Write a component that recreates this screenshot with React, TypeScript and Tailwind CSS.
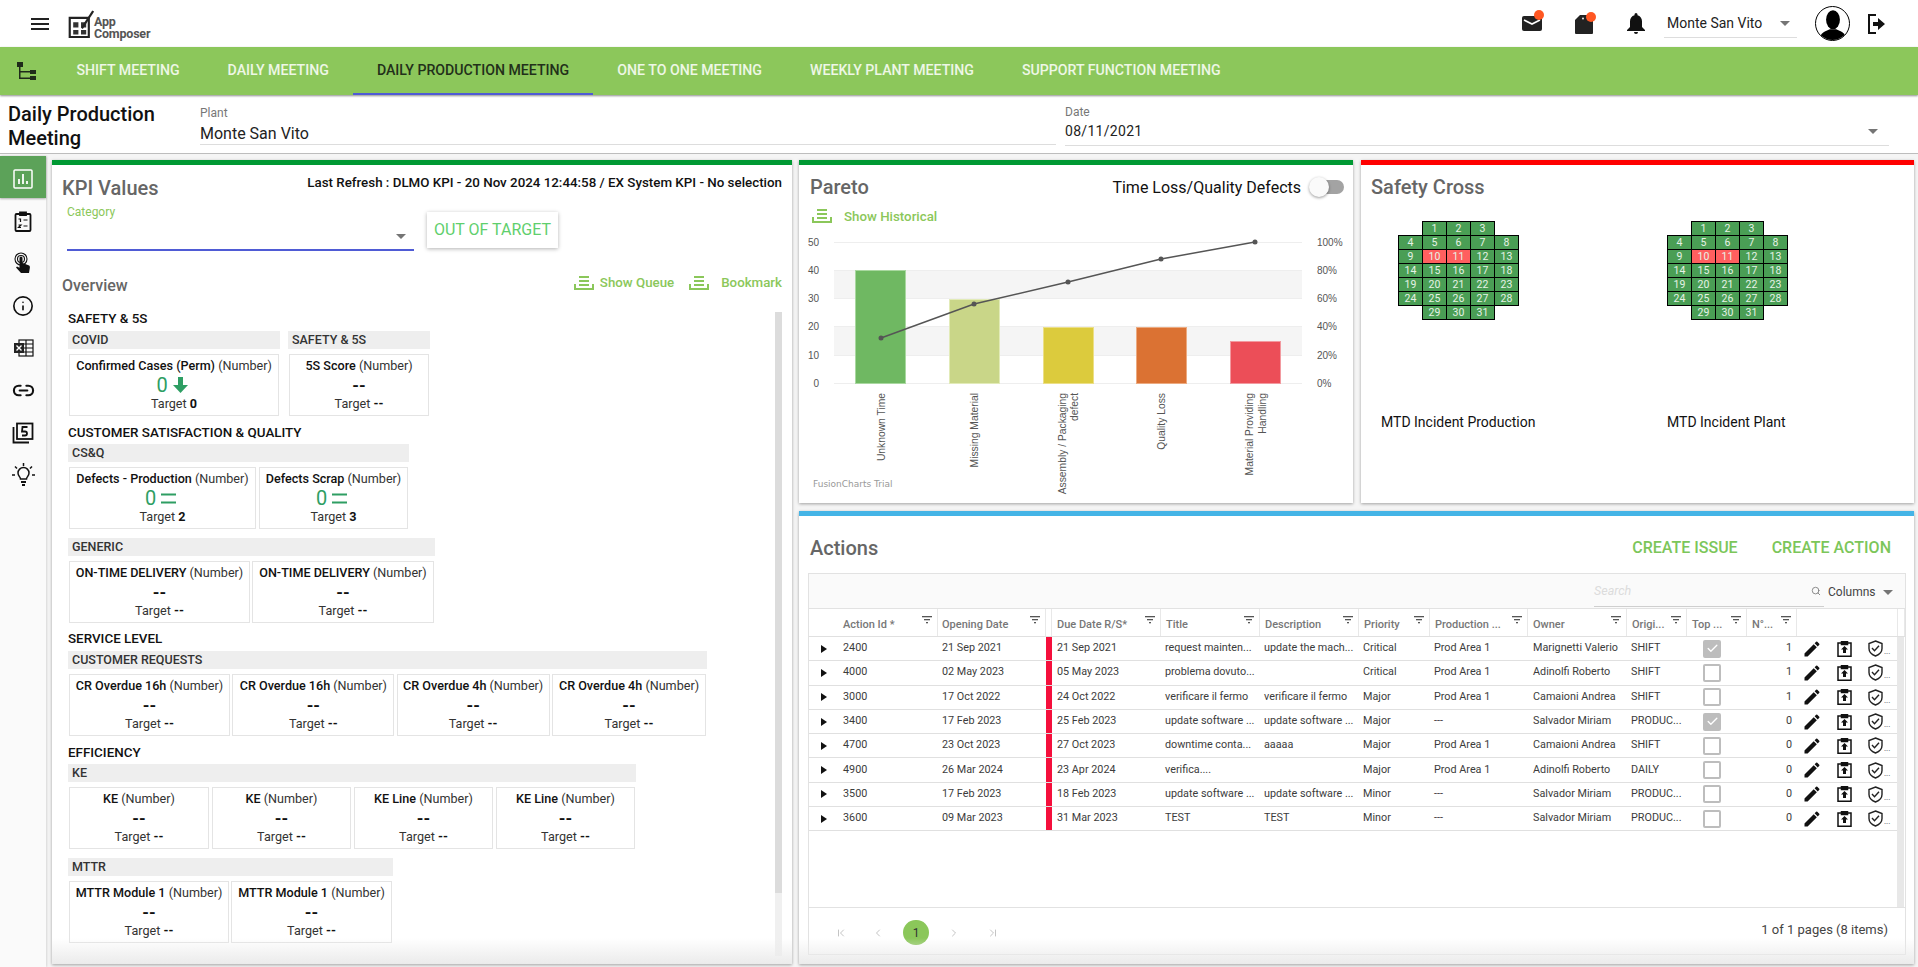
import type { ReactNode } from "react";
import { Check, ChevronFirst, ChevronLast, ChevronLeft, ChevronRight, Info, Link2, Search } from "lucide-react";

const tabs = ["SHIFT MEETING", "DAILY MEETING", "DAILY PRODUCTION MEETING", "ONE TO ONE MEETING", "WEEKLY PLANT MEETING", "SUPPORT FUNCTION MEETING"];

function Caret({ className = "" }: { className?: string }) {
  return <span className={`inline-block w-0 h-0 border-x-[5px] border-x-transparent border-t-[5px] border-t-[#757575] ${className}`} />;
}

function QueueIcon() {
  return (
    <svg width="20" height="14" viewBox="0 0 20 14" fill="none" stroke="#8bc75a" strokeWidth="2" className="shrink-0">
      <path d="M5 1h10M5 5h10M5 9h10M1 8v5h18V8" />
    </svg>
  );
}

function FilterIcon() {
  return (
    <svg width="10" height="8" viewBox="0 0 10 8" className="shrink-0" fill="#555">
      <rect x="0" y="0" width="10" height="1.3" />
      <rect x="2" y="3" width="6" height="1.3" />
      <rect x="4" y="6" width="2" height="1.3" />
    </svg>
  );
}

function KpiCard({ name, w, value = "--", target = "--", trend }: { name: string; w: string; value?: string; target?: string; trend?: "down" | "eq" }) {
  return (
    <div className={`${w} h-[62px] border border-[#e4e4e4] flex flex-col items-center pt-[2px] shrink-0`}>
      <p className="text-[12.6px] leading-[18px] text-[#111] whitespace-nowrap"><span className="font-medium">{name}</span> <span className="text-[#333]">(Number)</span></p>
      {trend ? (
        <div className="flex items-center gap-[5px] h-[20px] mr-[4px] text-[#2e9e63]">
          <span className="text-[20px] leading-[20px]">{value}</span>
          {trend === "down" ? (
            <svg width="15" height="16" viewBox="0 0 15 16" fill="#2e9e63"><path d="M5 0h5v8h5l-7.500 8L0 8h5z" /></svg>
          ) : (
            <svg width="15" height="11" viewBox="0 0 15 11" fill="#2e9e63"><rect width="15" height="2" y="0.500" /><rect width="15" height="2" y="8.500" /></svg>
          )}
        </div>
      ) : (
        <div className="h-[20px] text-[17px] leading-[20px] font-bold text-[#111]">{value}</div>
      )}
      <p className="text-[12.6px] leading-[16px] text-[#333] mt-[1px]">Target <span className="font-bold text-[#111]">{target}</span></p>
    </div>
  );
}

function Group({ title, w, children }: { title: string; w: string; children: ReactNode }) {
  return (
    <div className={`${w} shrink-0`}>
      <div className="h-[18px] bg-[#eeeeee] text-[12.5px] leading-[18px] font-medium text-[#333] pl-[4px]">{title}</div>
      <div className="flex justify-between px-[1px] mt-[5px]">{children}</div>
    </div>
  );
}

function Heading({ children }: { children: ReactNode }) {
  return <h3 className="text-[13.4px] leading-[18px] font-medium text-[#111]">{children}</h3>;
}

function BottomFade() {
  return <div className="absolute left-0 right-0 bottom-0 h-[26px] bg-gradient-to-t from-[#ebebeb] to-transparent pointer-events-none" />;
}

function KpiPanel() {
  return (
    <section className="relative w-[740px] h-[804px] bg-white border-t-[5px] border-[#009933] shadow-[0_1px_3px_rgba(0,0,0,.35)] shrink-0 flex flex-col">
      <div className="flex justify-between pl-[10px] pr-[10px] mt-[8px]">
        <h2 className="text-[20px] font-medium text-[#666] leading-[28px] pt-[1px] h-[28px]">KPI Values</h2>
        <p className="text-[13.35px] font-medium text-[#111] leading-[18px] pt-[1px]">Last Refresh : DLMO KPI - 20 Nov 2024 12:44:58 / EX System KPI - No selection</p>
      </div>
      <div className="flex items-start pl-[15px] mt-[4px]">
        <div className="w-[347px] h-[46px] border-b-2 border-[#4f5bd5] relative">
          <span className="block text-[12px] leading-[14px] text-[#8bc75a]">Category</span>
          <Caret className="absolute right-[8px] top-[29px]" />
        </div>
        <button className="ml-[13px] mt-[7px] w-[131px] h-[36px] bg-white text-[#5fcf6d] text-[16px] shadow-[0_1px_4px_rgba(0,0,0,.3)]">OUT OF TARGET</button>
      </div>
      <div className="flex justify-between items-start pl-[10px] pr-[10px] mt-[23px] h-[24px]">
        <span className="text-[16px] leading-[24px] font-medium text-[#666]">Overview</span>
        <div className="flex items-center h-[18px] text-[13.3px] font-medium text-[#8bc75a]">
          <QueueIcon /><span className="ml-[6px]">Show Queue</span>
          <span className="ml-[15px]"><QueueIcon /></span><span className="ml-[12px]">Bookmark</span>
        </div>
      </div>
      <div className="relative flex-1 min-h-0 pl-[16px] pt-[12px]">
        <div className="absolute right-[10px] top-[14px] bottom-[8px] w-[7px] bg-[#f0f0f0]">
          <div className="h-[581px] bg-[#dcdcdc]" />
        </div>
        <Heading>SAFETY &amp; 5S</Heading>
        <div className="flex gap-[8px] mt-[3px]">
          <Group title="COVID" w="w-[212px]"><KpiCard name="Confirmed Cases (Perm)" w="w-[210px]" value="0" target="0" trend="down" /></Group>
          <Group title="SAFETY & 5S" w="w-[142px]"><KpiCard name="5S Score" w="w-[140px]" /></Group>
        </div>
        <div className="mt-[8px]"><Heading>CUSTOMER SATISFACTION &amp; QUALITY</Heading></div>
        <div className="mt-[2px]">
          <Group title="CS&Q" w="w-[341px]">
            <KpiCard name="Defects - Production" w="w-[187px]" value="0" target="2" trend="eq" />
            <KpiCard name="Defects Scrap" w="w-[149px]" value="0" target="3" trend="eq" />
          </Group>
        </div>
        <div className="mt-[9px]">
          <Group title="GENERIC" w="w-[367px]">
            <KpiCard name="ON-TIME DELIVERY" w="w-[181px]" />
            <KpiCard name="ON-TIME DELIVERY" w="w-[182px]" />
          </Group>
        </div>
        <div className="mt-[7px]"><Heading>SERVICE LEVEL</Heading></div>
        <div className="mt-[3px]">
          <Group title="CUSTOMER REQUESTS" w="w-[639px]">
            <KpiCard name="CR Overdue 16h" w="w-[161px]" />
            <KpiCard name="CR Overdue 16h" w="w-[162px]" />
            <KpiCard name="CR Overdue 4h" w="w-[153px]" />
            <KpiCard name="CR Overdue 4h" w="w-[154px]" />
          </Group>
        </div>
        <div className="mt-[8px]"><Heading>EFFICIENCY</Heading></div>
        <div className="mt-[2px]">
          <Group title="KE" w="w-[568px]">
            <KpiCard name="KE" w="w-[140px]" />
            <KpiCard name="KE" w="w-[139px]" />
            <KpiCard name="KE Line" w="w-[139px]" />
            <KpiCard name="KE Line" w="w-[139px]" />
          </Group>
        </div>
        <div className="mt-[9px]">
          <Group title="MTTR" w="w-[325px]">
            <KpiCard name="MTTR Module 1" w="w-[160px]" />
            <KpiCard name="MTTR Module 1" w="w-[161px]" />
          </Group>
        </div>
      </div>
      <BottomFade />
    </section>
  );
}

// chart coordinates are page pixels, shifted by the svg's own origin
const bars = [
  { x: 855, top: 270, fill: "#6fb862", edge: "#a9d8a0" },
  { x: 949, top: 299, fill: "#c9d688", edge: "#e2ebb8" },
  { x: 1043, top: 327, fill: "#dccb3d", edge: "#ecdf86" },
  { x: 1136, top: 327, fill: "#db7233", edge: "#ecaa80" },
  { x: 1230, top: 341, fill: "#ec4e58", edge: "#f29aa0" },
];
const paretoLine = [[881, 338], [974, 304], [1068, 282], [1161, 259], [1255, 242]];
const gridY: [string, string, number][] = [["50", "100%", 242], ["40", "80%", 270], ["30", "60%", 298], ["20", "40%", 326], ["10", "20%", 355], ["0", "0%", 383]];
const xLabels: [string, number][][] = [
  [["Unknown Time", 885]],
  [["Missing Material", 978]],
  [["Assembly / Packaging", 1066], ["defect", 1078]],
  [["Quality Loss", 1165]],
  [["Material Providing", 1253], ["Handling", 1266]],
];

function ParetoChart() {
  return (
    <svg width="554" height="277" viewBox="799 226 554 277" className="block" fontFamily="Liberation Sans">
      <rect x="834" y="270" width="468" height="28" fill="#f5f5f5" />
      <rect x="834" y="326" width="468" height="29" fill="#f5f5f5" />
      {gridY.map(([l, , y]) => <line key={l} x1="834" x2="1302" y1={y + 0.5} y2={y + 0.5} stroke="#eeeeee" />)}
      {bars.map((b) => (
        <rect key={b.x} x={b.x + 0.5} y={b.top + 0.5} width="50" height={383 - b.top} fill={b.fill} stroke={b.edge} />
      ))}
      <polyline points={paretoLine.map((p) => p.join(",")).join(" ")} fill="none" stroke="#555" strokeWidth="1.5" />
      {paretoLine.map((p) => <circle key={p[0]} cx={p[0]} cy={p[1]} r="2.5" fill="#555" />)}
      {gridY.map(([l, r, y]) => (
        <g key={l} fontSize="10" fill="#555">
          <text x="819" y={y + 4} textAnchor="end">{l}</text>
          <text x="1317" y={y + 4}>{r}</text>
        </g>
      ))}
      {xLabels.flat().map(([s, x]) => (
        <text key={s} transform={`translate(${x},393) rotate(-90)`} textAnchor="end" fontSize="10.3" fill="#555">{s}</text>
      ))}
      <text x="813" y="487" fontSize="9" fill="#999" fontFamily="DejaVu Sans">FusionCharts Trial</text>
    </svg>
  );
}

function ParetoPanel() {
  return (
    <section className="w-[554px] h-[343px] bg-white border-t-[5px] border-[#009933] shadow-[0_1px_3px_rgba(0,0,0,.35)] shrink-0 flex flex-col">
      <div className="flex justify-between items-center pl-[11px] pr-[9px] mt-[8px] h-[28px]">
        <h2 className="text-[20px] font-medium text-[#666]">Pareto</h2>
        <div className="flex items-center">
          <span className="text-[16px] text-[#111] pt-[1px]">Time Loss/Quality Defects</span>
          <span className="relative ml-[11px] w-[32px] h-[14px] rounded-full bg-[#a3a3a3]">
            <span className="absolute -left-[3px] -top-[3px] w-[20px] h-[20px] rounded-full bg-[#fafafa] shadow-[0_1px_3px_rgba(0,0,0,.4)]" />
          </span>
        </div>
      </div>
      <div className="flex items-center pl-[13px] mt-[5px] text-[13.3px] font-medium text-[#8bc75a] h-[20px]">
        <QueueIcon /><span className="ml-[12px] pt-[1px]">Show Historical</span>
      </div>
      <ParetoChart />
    </section>
  );
}

const crossRows = [
  { pad: true, cells: [1, 2, 3] },
  { pad: false, cells: [4, 5, 6, 7, 8] },
  { pad: false, cells: [9, 10, 11, 12, 13] },
  { pad: false, cells: [14, 15, 16, 17, 18] },
  { pad: false, cells: [19, 20, 21, 22, 23] },
  { pad: false, cells: [24, 25, 26, 27, 28] },
  { pad: true, cells: [29, 30, 31] },
];

function Cross() {
  return (
    <div className="flex flex-col w-[121px] h-[99px]">
      {crossRows.map((r, i) => (
        <div key={i} className={`flex h-[14px] ${r.pad ? "pl-[24px]" : ""}`}>
          {r.cells.map((n) => (
            <div key={n} className={`w-[25px] -mr-[1px] h-[15px] shrink-0 border border-black text-[10.5px] leading-[13px] text-center text-[#e6f2e6] ${n === 10 || n === 11 ? "bg-[#ff5f5f]" : "bg-[#4a9e55]"}`}>{n}</div>
          ))}
        </div>
      ))}
    </div>
  );
}

function SafetyPanel() {
  return (
    <section className="flex-1 h-[343px] bg-white border-t-[5px] border-[#ff0000] shadow-[0_1px_3px_rgba(0,0,0,.35)] flex flex-col">
      <h2 className="text-[20px] font-medium text-[#666] pl-[10px] mt-[8px] leading-[28px]">Safety Cross</h2>
      <div className="flex pl-[20px] mt-[20px]">
        <div className="w-[286px]">
          <div className="ml-[17px]"><Cross /></div>
          <p className="text-[14px] leading-[20px] text-[#111] mt-[92px] whitespace-nowrap">MTD Incident Production</p>
        </div>
        <div>
          <Cross />
          <p className="text-[14px] leading-[20px] text-[#111] mt-[92px] whitespace-nowrap">MTD Incident Plant</p>
        </div>
      </div>
    </section>
  );
}

const columns: [string, string][] = [
  ["Action Id *", "w-[129px] pl-[34px] pr-[5px]"],
  ["Opening Date", "w-[108px] pl-[4px] pr-[5px]"],
  ["", "w-[6px]"],
  ["Due Date R/S*", "w-[109px] pl-[5px] pr-[5px]"],
  ["Title", "w-[99px] pl-[5px] pr-[5px]"],
  ["Description", "w-[99px] pl-[5px] pr-[5px]"],
  ["Priority", "w-[71px] pl-[5px] pr-[5px]"],
  ["Production ...", "w-[98px] pl-[5px] pr-[5px]"],
  ["Owner", "w-[99px] pl-[5px] pr-[5px]"],
  ["Origi...", "w-[60px] pl-[5px] pr-[5px]"],
  ["Top ...", "w-[60px] pl-[5px] pr-[5px]"],
  ["N°...", "w-[50px] pl-[5px] pr-[5px]"],
  ["", "w-[101px]"],
  ["", "w-[7px]"],
];

const rows = [
  ["2400", "21 Sep 2021", "21 Sep 2021", "request mainten...", "update the mach...", "Critical", "Prod Area 1", "Marignetti Valerio", "SHIFT", true, 1],
  ["4000", "02 May 2023", "05 May 2023", "problema dovuto...", "", "Critical", "Prod Area 1", "Adinolfi Roberto", "SHIFT", false, 1],
  ["3000", "17 Oct 2022", "24 Oct 2022", "verificare il fermo", "verificare il fermo", "Major", "Prod Area 1", "Camaioni Andrea", "SHIFT", false, 1],
  ["3400", "17 Feb 2023", "25 Feb 2023", "update software ...", "update software ...", "Major", "---", "Salvador Miriam", "PRODUC...", true, 0],
  ["4700", "23 Oct 2023", "27 Oct 2023", "downtime conta...", "aaaaa", "Major", "Prod Area 1", "Camaioni Andrea", "SHIFT", false, 0],
  ["4900", "26 Mar 2024", "23 Apr 2024", "verifica....", "", "Major", "Prod Area 1", "Adinolfi Roberto", "DAILY", false, 0],
  ["3500", "17 Feb 2023", "18 Feb 2023", "update software ...", "update software ...", "Minor", "---", "Salvador Miriam", "PRODUC...", false, 0],
  ["3600", "09 Mar 2023", "31 Mar 2023", "TEST", "TEST", "Minor", "---", "Salvador Miriam", "PRODUC...", false, 0],
] as const;

function Cell({ w, children }: { w: string; children?: ReactNode }) {
  return <div className={`${w} shrink-0 pb-[1px]`}>{children}</div>;
}

function RowIcons() {
  return (
    <div className="flex items-center pl-[5px]">
      <svg width="20" height="20" viewBox="0 0 24 24" fill="#111" className="shrink-0"><path d="M3 17.250V21h3.750L17.810 9.940l-3.750-3.750L3 17.250zM20.710 7.040a1 1 0 000-1.410l-2.340-2.340a1 1 0 00-1.410 0l-1.830 1.830 3.750 3.750 1.830-1.830z" /></svg>
      <span className="ml-[15px]">
        <svg width="15" height="16" viewBox="0 0 15 16" fill="none" stroke="#111" strokeWidth="1.500" className="block">
          <path d="M4.500 2H1v13.250h13V2h-3.500" />
          <path d="M4.500 .5h6v3h-6z" fill="#111" />
          <path d="M7.500 5l3.500 3.500H9V12H6V8.500H4z" fill="#111" stroke="none" />
        </svg>
      </span>
      <span className="ml-[16px] flex items-end">
        <svg width="15" height="17" viewBox="0 0 15 17" fill="none" stroke="#222" strokeWidth="1.400" className="block shrink-0">
          <path d="M7.500 1L14 3.500v5c0 3.500-2.500 6-6.500 7.500C3.500 14.500 1 12 1 8.500v-5z" />
          <path d="M4 8l2.500 2.700 4.500-5" />
        </svg>
        <span className="text-[8px] leading-[10px] ml-[1px] text-[#444]">...</span>
      </span>
    </div>
  );
}

function ActionsRow({ row }: { row: (typeof rows)[number] }) {
  return (
    <div className="flex items-center h-[24.3px] border-b border-[#e0e0e0] text-[10.8px] text-[#3c3c3c] whitespace-nowrap">
      <div className="w-[34px] shrink-0 pl-[12px]"><span className="block w-0 h-0 border-y-[4px] border-y-transparent border-l-[6px] border-l-[#111]" /></div>
      <Cell w="w-[95px]">{row[0]}</Cell>
      <Cell w="w-[108px] pl-[4px]">{row[1]}</Cell>
      <div className="w-[6px] h-full bg-[#f50f3c] shrink-0" />
      <Cell w="w-[109px] pl-[5px]">{row[2]}</Cell>
      <Cell w="w-[99px] pl-[4px]">{row[3]}</Cell>
      <Cell w="w-[99px] pl-[4px]">{row[4]}</Cell>
      <Cell w="w-[71px] pl-[4px]">{row[5]}</Cell>
      <Cell w="w-[98px] pl-[4px]">{row[6]}</Cell>
      <Cell w="w-[99px] pl-[5px]">{row[7]}</Cell>
      <Cell w="w-[60px] pl-[4px]">{row[8]}</Cell>
      <div className="w-[60px] shrink-0 pl-[16px]">
        <span className={`w-[18px] h-[18px] rounded-[2px] flex items-center justify-center ${row[9] ? "bg-[#bdbdbd]" : "border-2 border-[#bdbdbd]"}`}>
          {row[9] && <Check size={13} color="#fff" strokeWidth={2.5} />}
        </span>
      </div>
      <div className="w-[50px] shrink-0 text-right pr-[5px] pb-[1px]">{row[10]}</div>
      <RowIcons />
    </div>
  );
}

function ActionsPanel() {
  return (
    <section className="relative shrink-0 bg-white border-t-[5px] border-[#44b4e6] shadow-[0_1px_3px_rgba(0,0,0,.35)] flex flex-col h-[453px]">
      <div className="flex justify-between items-center pl-[11px] pr-[23px] h-[40px] mt-[12px]">
        <h2 className="text-[20px] font-medium text-[#666]">Actions</h2>
        <div className="flex gap-[34px] text-[16px] font-medium text-[#7cc65a]">
          <span>CREATE ISSUE</span>
          <span>CREATE ACTION</span>
        </div>
      </div>
      <div className="ml-[9px] mr-[8px] mt-[5px] mb-[9px] border border-[#e2e2e2] flex-1 flex flex-col min-h-0">
        <div className="h-[35px] bg-[#fafafa] border-b border-[#e2e2e2] flex items-start justify-end shrink-0">
          <div className="relative w-[230px] h-[32px] mt-[1px] border-b border-[#cfcfcf] text-[12.5px] leading-[32px] italic text-[#dcdcdc]">
            Search
            <Search size={10} color="#777" className="absolute right-[3px] top-[11px]" />
          </div>
          <span className="ml-[4px] w-[47px] mt-[9px] text-[12px] leading-[18px] text-[#444]">Columns</span>
          <Caret className="ml-[8px] mr-[12px] mt-[16px]" />
        </div>
        <div className="flex h-[28px] border-b border-[#e0e0e0] shrink-0 text-[11px] font-medium text-[#777] whitespace-nowrap">
          {columns.map(([label, w], i) => (
            <div key={i} className={`${w} shrink-0 flex items-start justify-between border-r border-[#e8e8e8]`}>
              <span className="mt-[9px] leading-[14px]">{label}</span>
              {label && <span className="mt-[7px]"><FilterIcon /></span>}
            </div>
          ))}
        </div>
        <div className="relative flex-1 min-h-0">
          <div className="absolute right-[1px] top-0 bottom-0 w-[7px] bg-[#e8e8e8]" />
          <div className="w-[1088px]">
            {rows.map((r) => <ActionsRow key={r[0]} row={r} />)}
          </div>
        </div>
        <div className="h-[47px] border-t border-[#e2e2e2] flex shrink-0 pl-[26px] pr-[17px] justify-between">
          <div className="flex items-center text-[#c4c4c4] mt-[3px]">
            <ChevronFirst size={12} />
            <ChevronLeft size={12} className="ml-[25px]" />
            <span className="ml-[19px] w-[26px] h-[25px] rounded-full bg-[#8bc75a] flex items-center justify-center text-[12px] text-[#333]">1</span>
            <ChevronRight size={12} className="ml-[19px]" />
            <ChevronLast size={12} className="ml-[27px]" />
          </div>
          <span className="text-[13px] leading-[18px] mt-[13px] text-[#444]">1 of 1 pages (8 items)</span>
        </div>
      </div>
      <BottomFade />
    </section>
  );
}

function Sidebar() {
  const item = "h-[42.3px] pt-[4px] flex items-center justify-center text-[#111]";
  return (
    <aside className="w-[46px] shrink-0 bg-[#fafafa] mt-[2px] flex flex-col shadow-[1px_0_2px_rgba(0,0,0,.12)]">
      <div className="h-[42px] pt-[4px] bg-[#5ca259] flex items-center justify-center shadow-[0_1px_2px_rgba(0,0,0,.3)]">
        <svg width="20" height="20" viewBox="0 0 20 20" fill="none" stroke="#fff" strokeWidth="1.500"><rect x="1" y="1" width="18" height="18" rx="1" /><path d="M6 15v-5M10 15V5M14 15v-3" strokeWidth="1.800" /></svg>
      </div>
      <div className={item}>
        <svg width="18" height="21" viewBox="0 0 18 21" fill="none" stroke="#111" strokeWidth="1.800"><rect x="1.500" y="3" width="15" height="17" rx="1" /><path d="M6 1.500h6V4H6z" fill="#111" /><path d="M4.500 8h2v3M4.500 14h2.500l-2.500 2.500H7M9.500 9h4M9.500 15h4" strokeWidth="1.200" /></svg>
      </div>
      <div className={item}>
        <svg width="18" height="22" viewBox="0 0 18 22" fill="none" stroke="#111" strokeWidth="1.100"><circle cx="7" cy="7" r="6" /><circle cx="7" cy="7" r="3.500" /><path d="M5.500 6a1.500 1.500 0 013 0v5l6 2.200c1 .4 1.500 1.200 1.400 2.200L15 21H7l-5-5.500 1-1 2.500 1.200z" fill="#111" stroke="none" /></svg>
      </div>
      <div className={item}><Info size={22} strokeWidth={1.8} /></div>
      <div className={item}>
        <svg width="21" height="18" viewBox="0 0 21 18" fill="none" stroke="#111" strokeWidth="1.200"><rect x="6" y="1" width="14" height="16" /><path d="M6 5h14M6 9h14M6 13h14M13 1v16" /><rect x="1" y="4" width="10" height="10" fill="#222" stroke="none" /><path d="M3.500 6.500l5 5M8.500 6.500l-5 5" stroke="#fff" strokeWidth="1.400" /></svg>
      </div>
      <div className={item}><Link2 size={23} strokeWidth={2.2} /></div>
      <div className={item}>
        <svg width="22" height="22" viewBox="0 0 22 22" fill="none" stroke="#111" strokeWidth="1.800"><rect x="5" y="1.500" width="15.500" height="15.500" /><path d="M1.500 5v15.500H17" /><path d="M15.500 5h-5l-.5 4.500h3a2 2 0 010 4h-3" strokeWidth="1.800" /></svg>
      </div>
      <div className={item}>
        <svg width="23" height="23" viewBox="0 0 23 23" fill="none" stroke="#111" strokeWidth="1.500">
          <path d="M11.500 0v3M3 3.500l2 2M20 3.500l-2 2M0 12h3M20 12h3" />
          <path d="M8.500 16c0-2-2.500-3-2.500-6a5.500 5.500 0 0111 0c0 3-2.500 4-2.500 6z" />
          <path d="M9 19h5M10 22h3" strokeWidth="1.800" />
        </svg>
      </div>
    </aside>
  );
}

export default function App() {
  return (
    <div className="font-['Roboto',sans-serif] w-[1918px] h-[967px] overflow-hidden bg-[#f5f5f5] flex flex-col">
      {/* Top bar */}
      <header className="h-[47px] bg-white flex items-center shrink-0">
        <svg width="18" height="12" viewBox="0 0 18 12" fill="#222" className="ml-[31px] shrink-0"><rect width="18" height="2" /><rect y="5" width="18" height="2" /><rect y="10" width="18" height="2" /></svg>
        <div className="ml-[19px] flex items-center">
          <svg width="26" height="32" viewBox="0 0 30 32" fill="none" className="shrink-0">
            <path d="M2 9h22v22H2z" stroke="#222" strokeWidth="2.500" />
            <path d="M6 14h6v6H6zM15 14h6v6h-6zM6 23h6v5H6zM15 23h6v5h-6z" fill="#333" />
            <path d="M16 21L29 1" stroke="#222" strokeWidth="2.500" />
          </svg>
          <div className="text-[12.5px] font-bold text-[#555] mt-[9px] tracking-[-.2px]">
            <div className="leading-[12px]">App</div>
            <div className="leading-[12px]">Composer</div>
          </div>
        </div>
        <div className="ml-auto flex items-center mr-[33px]">
          <span className="relative w-[20px] h-[15px] bg-[#222] rounded-[2px]">
            <svg width="20" height="15" viewBox="0 0 20 15" fill="none" className="block"><path d="M2 4l8 4 8-4" stroke="#fff" strokeWidth="1.600" /></svg>
            <span className="absolute -right-[2px] -top-[6px] w-[10px] h-[10px] rounded-full bg-[#ff5722]" />
          </span>
          <span className="relative ml-[33px] w-[18px] h-[19px] mt-[1px]">
            <svg width="18" height="19" viewBox="0 0 18 19" fill="#222" className="block"><path d="M5 0h12a1 1 0 011 1v17a1 1 0 01-1 1H1a1 1 0 01-1-1V5z" /><circle cx="8" cy="3.500" r=".9" fill="#fff" /></svg>
            <span className="absolute -right-[3px] -top-[3px] w-[10px] h-[10px] rounded-full bg-[#ff5722]" />
          </span>
          <svg width="18" height="21" viewBox="0 0 18 21" fill="#111" className="ml-[34px] shrink-0"><path d="M9 0a1.500 1.500 0 011.500 1.500v.7C13.300 2.900 15 5.300 15 8.200V14l3 3v1H0v-1l3-3V8.200c0-2.900 1.700-5.300 4.500-6v-.7A1.500 1.500 0 019 0z" /><path d="M7 19h4a2 2 0 01-4 0z" /></svg>
          <div className="ml-[19px] w-[133px] h-[28px] border-b border-[#ddd] flex items-center justify-between pl-[3px] pr-[7px] text-[14px] text-[#222]">
            Monte San Vito <Caret />
          </div>
          <div className="ml-[18px] w-[35px] h-[35px] rounded-full border-[1.5px] border-black overflow-hidden flex items-end justify-center">
            <svg width="32" height="32" viewBox="0 0 30 30" fill="#000" className="shrink-0"><ellipse cx="15" cy="11" rx="6.500" ry="9" /><path d="M2 30c1-7 6-8 10-10h6c4 2 9 3 10 10z" /></svg>
          </div>
          <svg width="18" height="20" viewBox="0 0 18 20" fill="none" className="ml-[17px] shrink-0"><path d="M9 1H2v18h7" stroke="#111" strokeWidth="2" /><path d="M6 8h5V4l7 6-7 6v-4H6z" fill="#111" /></svg>
        </div>
      </header>

      {/* Meeting tabs */}
      <nav className="h-[48px] bg-[#8cc75b] shadow-[0_1px_2px_rgba(0,0,0,.45)] flex items-stretch shrink-0 relative">
        <div className="w-[52.5px] shrink-0 flex items-center pl-[17px]">
          <svg width="19" height="18" viewBox="0 0 19 18" fill="#1f2b1a"><rect x="0" y="0" width="6" height="5" /><rect x="13" y="8" width="6" height="4" /><rect x="13" y="14" width="6" height="4" /><path d="M2 5v12h11v-1.500H3.500v-5H13V9H3.500V5z" /></svg>
        </div>
        {tabs.map((t, i) => (
          <div key={t} className={`px-[24px] pt-[2px] flex items-center text-[14.15px] font-medium whitespace-nowrap border-b-2 ${i === 2 ? "text-[#22301a] border-[#4f5bd5]" : "text-white/85 border-transparent"}`}>{t}</div>
        ))}
      </nav>

      {/* Page heading */}
      <div className="h-[59px] bg-white flex shrink-0 border-b border-[#bdbdbd]">
        <h1 className="w-[200px] pl-[8px] text-[20px] leading-[24px] font-medium text-[#111] pt-[7px] shrink-0">Daily Production Meeting</h1>
        <div className="w-[856px] h-[50px] border-b border-[#ddd] pt-[11px] shrink-0">
          <p className="text-[12px] leading-[14px] text-[#777]">Plant</p>
          <p className="text-[16px] leading-[22px] text-[#222] mt-[3px]">Monte San Vito</p>
        </div>
        <div className="ml-[9px] w-[824px] h-[51px] border-b border-[#ddd] pt-[10px] relative">
          <p className="text-[12px] leading-[14px] text-[#777]">Date</p>
          <p className="text-[14px] leading-[22px] text-[#222] mt-[1px] tracking-[.3px]">08/11/2021</p>
          <Caret className="absolute right-[11px] top-[34px]" />
        </div>
      </div>

      {/* Dashboard */}
      <div className="flex flex-1 min-h-0">
        <Sidebar />
        <div className="flex flex-1 min-w-0 pt-[6px] pl-[6px] gap-[7px]">
          <KpiPanel />
          <div className="flex-1 flex flex-col gap-[8px] pr-[4px] min-w-0">
            <div className="flex gap-[8px]">
              <ParetoPanel />
              <SafetyPanel />
            </div>
            <ActionsPanel />
          </div>
        </div>
      </div>
    </div>
  );
}
